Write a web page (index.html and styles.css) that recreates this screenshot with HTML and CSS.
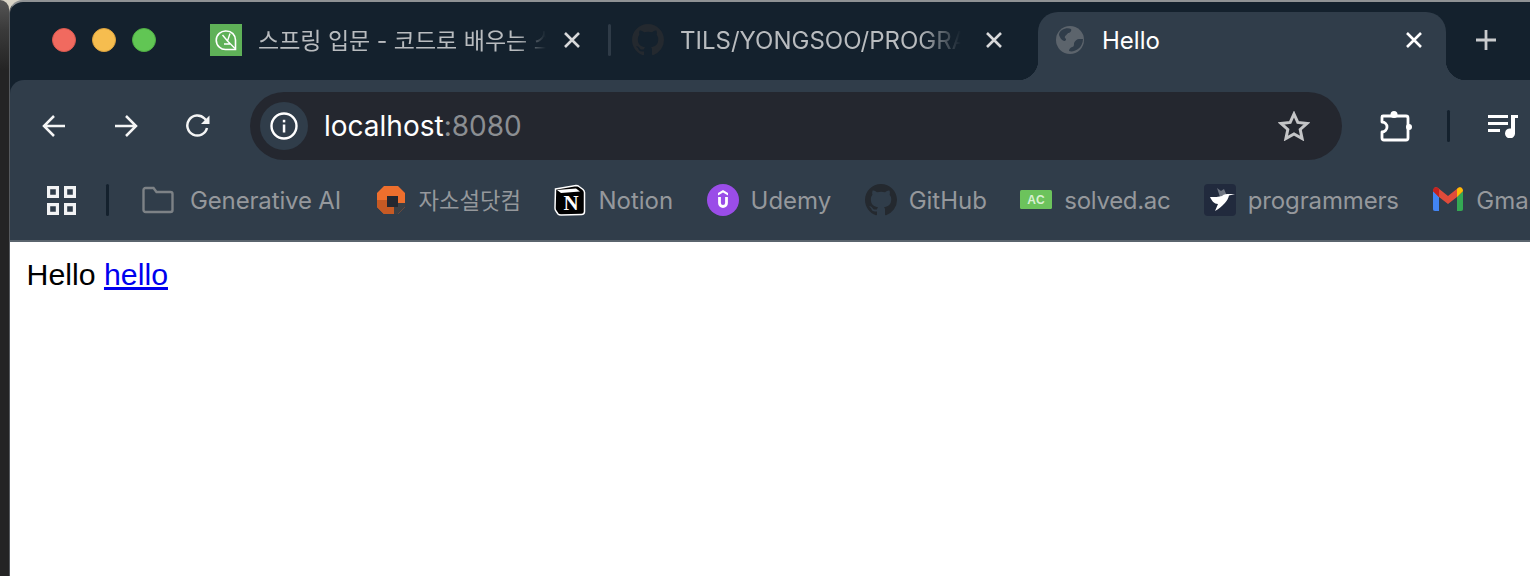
FILE: index.html
```html
<!DOCTYPE html>
<html lang="en">
<head>
    <meta charset="UTF-8">
    <title>Hello</title>
    <link rel="stylesheet" href="styles.css">
</head>
<body>
<div class="side"></div>
<div class="window">
    <div class="tabstrip">
        <div class="lights">
            <span class="light red"></span>
            <span class="light yellow"></span>
            <span class="light green"></span>
        </div>
        <div class="tab tab-first">
            <svg class="fav" viewBox="0 0 32 32">
                <rect width="32" height="32" fill="#5fb158"/>
                <path d="M16.500 7a9.300 9.300 0 1 0 0 18.500H25.500V16a9 9 0 0 0-9-9z" fill="none" stroke="#fff" stroke-width="1.600"/>
                <path d="M12.500 11l5 6M20 9.500l-2.500 7.500M17.500 17l7.500 7.500M14 20h6" fill="none" stroke="#fff" stroke-width="1.400"/>
            </svg>
            <span class="tab-title title-first">스프링 입문 - 코드로 배우는 스</span>
            <svg class="close" viewBox="0 0 16 16"><path d="M1 1l14 14M15 1L1 15"/></svg>
        </div>
        <span class="tab-sep"></span>
        <div class="tab tab-second">
            <svg class="fav" viewBox="0 0 16 16"><path class="octo" d="M8 0C3.580 0 0 3.580 0 8c0 3.540 2.290 6.530 5.470 7.590.4.070.550-.170.550-.380 0-.190-.010-.820-.010-1.490-2.010.370-2.530-.490-2.690-.940-.090-.230-.480-.940-.820-1.130-.280-.150-.680-.520-.010-.530.630-.010 1.080.580 1.230.820.720 1.210 1.870.870 2.330.660.070-.520.280-.870.510-1.070-1.780-.2-3.640-.890-3.640-3.950 0-.870.310-1.590.820-2.150-.080-.2-.360-1.020.080-2.120 0 0 .670-.210 2.200.820.640-.180 1.320-.270 2-.270.680 0 1.360.090 2 .270 1.530-1.040 2.200-.820 2.200-.820.440 1.100.160 1.920.080 2.120.510.560.820 1.270.820 2.150 0 3.070-1.870 3.750-3.650 3.950.290.250.540.730.540 1.480 0 1.070-.010 1.930-.010 2.200 0 .210.150.460.550.380A8.013 8.013 0 0 0 16 8c0-4.420-3.580-8-8-8z"/></svg>
            <span class="tab-title title-second">TILS/YONGSOO/PROGRA</span>
            <svg class="close" viewBox="0 0 16 16"><path d="M1 1l14 14M15 1L1 15"/></svg>
        </div>
        <div class="tab tab-active">
            <svg class="globe" viewBox="0 0 28 28">
                <circle cx="14" cy="14" r="14" fill="#5c646c"/>
                <path d="M6 4c3-2 7-2 9-1 1 2-1 4-3 4-1 2-4 3-3 5 2 1 1 3-1 3-3-1-4-4-5-6 0-2 1-4 3-5zM27 13c0 4-2 8-5 10-3 2-6 3-9 2 0-2 1-3 3-4 2 0 2-2 2-4 1-2 3-4 5-4z" fill="#303d4a"/>
            </svg>
            <span class="tab-title title-active">Hello</span>
            <svg class="close close-active" viewBox="0 0 16 16"><path d="M1 1l14 14M15 1L1 15"/></svg>
        </div>
        <svg class="newtab" viewBox="0 0 20 20"><path d="M10 0v20M0 10h20"/></svg>
    </div>

    <div class="toolbar">
        <div class="nav">
            <svg class="nav-icon" viewBox="0 0 24 24"><path d="M23 12H2M12 2L2 12l10 10"/></svg>
            <svg class="nav-icon" viewBox="0 0 24 24"><path d="M1 12h21M12 2l10 10-10 10"/></svg>
            <svg class="nav-icon" viewBox="0 0 24 24"><path d="M21 14a10 10 0 1 1-2.500-9.500L22 8"/><path class="fill-white" d="M23.500 1.500v8.500h-8.500z"/></svg>
        </div>
        <div class="omnibox">
            <span class="info">
                <svg class="info-icon" viewBox="0 0 28 28">
                    <circle cx="14" cy="14" r="12.500" fill="none" stroke="#fff" stroke-width="2.400"/>
                    <rect x="12.800" y="12.500" width="2.500" height="8" fill="#fff"/>
                    <rect x="12.800" y="7.800" width="2.500" height="2.600" fill="#fff"/>
                </svg>
            </span>
            <span class="url">localhost<span class="port">:8080</span></span>
            <svg class="star" viewBox="0 0 32 30"><path d="M16 3l3.800 8.400 9.200 1-6.800 6.100 1.900 9L16 22.900 7.900 27.500l1.900-9L3 12.400l9.200-1z"/></svg>
        </div>
        <svg class="puzzle" viewBox="0 0 32 32">
            <path d="M3 6H26a2 2 0 0 1 2 2V28a2 2 0 0 1-2 2H4a2 2 0 0 1-2-2V22a5 5 0 0 0 0-10V7a1 1 0 0 1 1-1z"/>
            <circle cx="14" cy="4.500" r="3.500" fill="#fff"/>
            <circle cx="29" cy="17" r="3" fill="#fff"/>
        </svg>
        <span class="tool-sep"></span>
        <svg class="media" viewBox="0 0 30 24">
            <path d="M0 1h20v3H0zM0 8h20v3H0zM0 15h12v3H0z" fill="#fff"/>
            <path d="M23 1h7v3h-3v15a5 5 0 1 1-4-4.500z" fill="#fff"/>
        </svg>
    </div>

    <div class="bookmarks">
        <svg class="apps" viewBox="0 0 29 29">
            <path d="M1.600 1.600h8.800v8.800h-8.800zM18.600 1.600h8.800v8.800h-8.800zM1.600 18.600h8.800v8.800h-8.800zM18.600 18.600h8.800v8.800h-8.800z"/>
        </svg>
        <span class="bm-sep"></span>
        <div class="bm-list">
            <div class="bm bm-folder">
                <svg class="bm-icon" viewBox="0 0 32 32"><path class="folder" d="M1.500 6c0-1 1-2 2-2h8l3 4h14c1 0 2 1 2 2v16c0 1-1 2-2 2h-25c-1 0-2-1-2-2z"/></svg>
                <span class="bm-tight">Generative AI</span>
            </div>
            <div class="bm bm-ko">
                <svg class="bm-icon" viewBox="0 0 32 32">
                    <path d="M9 2h14l7 7v14l-7 7H9l-7-7V9z" fill="#ee6f2d"/>
                    <path d="M2 16h10v7h7v7H9l-7-7z" fill="#c65a24"/>
                    <path d="M19 19h11v4l-7 7h-4z" fill="#3b3f44"/>
                    <rect x="12" y="12" width="11" height="11" fill="#24272f"/>
                </svg>
                <span class="bm-ko-text">자소설닷컴</span>
            </div>
            <div class="bm">
                <svg class="bm-icon" viewBox="0 0 32 32">
                    <path d="M1.500 5L22 1.500c1 0 2 0 3 1l4 3c1 1 1.500 1.500 1.500 3v19c0 2-1 3-3 3L7 31c-1 0-2 0-3-1l-2-3c-1-1-1-2-1-3z" fill="#000" stroke="#fff" stroke-width="1.500"/>
                    <path d="M3 6l4 3 19-1.500-4-3z" fill="#fff"/>
                    <text class="notion-n" x="17" y="26" text-anchor="middle">N</text>
                </svg>
                <span>Notion</span>
            </div>
            <div class="bm">
                <svg class="bm-icon" viewBox="0 0 32 32">
                    <circle cx="16" cy="16" r="16" fill="#9a4de8"/>
                    <path d="M16 6l5 3v2.500l-5-3-5 3V9z" fill="#fff"/>
                    <path d="M12.500 13v6a3.500 3.500 0 0 0 7 0v-6" fill="none" stroke="#fff" stroke-width="2.800"/>
                </svg>
                <span>Udemy</span>
            </div>
            <div class="bm">
                <svg class="bm-icon" viewBox="0 0 16 16"><path class="octo" d="M8 0C3.580 0 0 3.580 0 8c0 3.540 2.290 6.530 5.470 7.590.4.070.550-.170.550-.380 0-.190-.010-.820-.010-1.490-2.010.370-2.530-.490-2.690-.940-.090-.230-.480-.940-.820-1.130-.280-.150-.680-.520-.010-.530.630-.010 1.080.580 1.230.820.720 1.210 1.870.870 2.330.660.070-.520.280-.870.510-1.070-1.780-.2-3.640-.890-3.640-3.950 0-.870.310-1.590.820-2.150-.080-.2-.360-1.020.080-2.120 0 0 .670-.210 2.200.820.640-.180 1.320-.270 2-.270.680 0 1.360.090 2 .270 1.530-1.040 2.200-.820 2.200-.820.440 1.100.160 1.920.080 2.120.510.560.820 1.270.820 2.150 0 3.070-1.870 3.750-3.650 3.950.290.250.540.730.540 1.480 0 1.070-.010 1.930-.010 2.200 0 .210.150.460.550.380A8.013 8.013 0 0 0 16 8c0-4.420-3.580-8-8-8z"/></svg>
                <span>GitHub</span>
            </div>
            <div class="bm">
                <svg class="bm-icon" viewBox="0 0 32 32">
                    <rect y="6" width="32" height="19" rx="1.500" fill="#6cc35c"/>
                    <text class="solved-ac" x="16" y="20" text-anchor="middle">AC</text>
                </svg>
                <span class="bm-tighter">solved.ac</span>
            </div>
            <div class="bm">
                <svg class="bm-icon" viewBox="0 0 32 32">
                    <rect width="32" height="32" rx="4" fill="#212a3d"/>
                    <path d="M13 4l4 3 3-2 3 7-7 1z" fill="#6f7682"/>
                    <path d="M6 13c4 0 9 0 12-1 2-2 5-2 7-2h6l-6 1.500c-1 5.500-7 11.500-14 15.500l3-7c-4 0-6-3-8-7z" fill="#fff"/>
                </svg>
                <span class="bm-tight">programmers</span>
            </div>
            <div class="bm">
                <svg class="bm-icon" viewBox="0 0 32 32">
                    <path d="M1 7v18c0 1 .5 2 2 2h4V13z" fill="#4285f4"/>
                    <path d="M25 13v14h4c1.500 0 2-1 2-2V7z" fill="#34a853"/>
                    <path d="M1 7l6 6 9 7 9-7 6-6-1-3c-1-1-3-1-4 0l-10 8L6 4C5 3 3 3 2 4z" fill="#e04b3a"/>
                    <path d="M1 7c0-3 3-5 5-3l1 1v8z" fill="#c5221f"/>
                    <path d="M31 7c0-3-3-5-5-3l-1 1v8z" fill="#fbbc04"/>
                </svg>
                <span>Gmail</span>
            </div>
        </div>
    </div>

    <div class="page">Hello <a class="page-link" href="#">hello</a></div>
</div>
</body>
</html>
```

FILE: styles.css
```css
*{
    margin: 0;
    padding: 0;
    box-sizing: border-box;
}
html,body{
    height: 100%;
    overflow: hidden;
}
body{
    background: #d9d4c6;
    font-family: Inter, "Noto Sans CJK KR", sans-serif;
    display: flex;
}
/* edge of the window behind */
.side{
    width: 9px;
    flex: none;
    background: linear-gradient(to bottom, #555 0, #3a3a3a 30px, #242424 70px);
    border-top-right-radius: 10px;
}
.window{
    flex: 1;
    min-width: 0;
    height: 100%;
    border-top: 2px solid #8f9294;
    border-left: 1px solid #565a5e;
    background: #14212d;
    border-top-left-radius: 14px;
    overflow: hidden;
    display: flex;
    flex-direction: column;
}

/* tabs */
.tabstrip{
    height: 78px;
    flex: none;
    display: flex;
    align-items: flex-end;
    color: #b9bcbf;
    font-size: 24px;
}
.lights{
    width: 200px;
    height: 68px;
    padding-left: 42px;
    padding-bottom: 12px;
    display: flex;
    align-items: center;
    gap: 16px;
    flex: none;
}
.light{
    width: 24px;
    height: 24px;
    border-radius: 50%;
}
.red{ background: #f16a5f; border: 1px solid #d9584e; }
.yellow{ background: #f6bd4f; border: 1px solid #dca23d; }
.green{ background: #61c654; border: 1px solid #4fae43; }
.tab{
    height: 68px;
    padding-bottom: 12px;
    display: flex;
    align-items: center;
    flex: none;
    position: relative;
}
.tab-first{ width: 396px; }
.tab-second{ width: 406px; }
.fav{
    width: 32px;
    height: 32px;
    flex: none;
}
.tab-title{
    white-space: nowrap;
    overflow: hidden;
}
.title-first{
    width: 288px;
    margin-left: 16px;
    padding-bottom: 3px;
    font-size: 23px;
    -webkit-mask-image: linear-gradient(to right, #000 90%, transparent 100%);
    mask-image: linear-gradient(to right, #000 90%, transparent 100%);
}
.title-second{
    width: 281px;
    margin-left: 16px;
    -webkit-mask-image: linear-gradient(to right, #000 85%, transparent 100%);
    mask-image: linear-gradient(to right, #000 85%, transparent 100%);
}
.close{
    width: 16px;
    height: 16px;
    margin-left: 18px;
    flex: none;
}
.title-second + .close{
    margin-left: 25px;
}
.close path{
    fill: none;
    stroke: #d8d9da;
    stroke-width: 2.600;
}
.close-active path{
    stroke: #fff;
}
.tab-sep{
    width: 3px;
    height: 32px;
    margin-bottom: 24px;
    margin-right: 21px;
    margin-left: 2px;
    background: #2f3b47;
    border-radius: 2px;
    flex: none;
}
.octo{
    fill: #24292f;
}
.tab-active{
    width: 408px;
    padding-left: 18px;
    background: #303d4a;
    border-radius: 20px 20px 0 0;
    color: #fff;
}
.tab-active::before,
.tab-active::after{
    content: "";
    position: absolute;
    bottom: 0;
    width: 20px;
    height: 20px;
}
.tab-active::before{
    left: -20px;
    background: radial-gradient(circle at 0 0, transparent 20px, #303d4a 20.500px);
}
.tab-active::after{
    right: -20px;
    background: radial-gradient(circle at 100% 0, transparent 20px, #303d4a 20.500px);
}
.globe{
    width: 28px;
    height: 28px;
    flex: none;
}
.title-active{
    width: 286px;
    margin-left: 18px;
}
.newtab{
    width: 20px;
    height: 20px;
    margin-left: 30px;
    margin-bottom: 30px;
    flex: none;
}
.newtab path{
    fill: none;
    stroke: #c9cbcd;
    stroke-width: 2.800;
}

/* toolbar */
.toolbar{
    height: 92px;
    flex: none;
    background: #303d4a;
    border-top-left-radius: 14px;
    display: flex;
    align-items: center;
}
.nav{
    width: 240px;
    padding-left: 32px;
    display: flex;
    align-items: center;
    gap: 48px;
    flex: none;
}
.nav-icon{
    width: 24px;
    height: 24px;
    flex: none;
}
.nav-icon path{
    fill: none;
    stroke: #f4f5f5;
    stroke-width: 2.500;
}
.nav-icon .fill-white{
    fill: #f4f5f5;
    stroke: none;
}
.omnibox{
    width: 1092px;
    height: 68px;
    border-radius: 34px;
    background: #24272f;
    display: flex;
    align-items: center;
    padding-left: 10px;
    flex: none;
}
.info{
    width: 48px;
    height: 48px;
    border-radius: 50%;
    background: #303d4a;
    display: flex;
    align-items: center;
    justify-content: center;
    flex: none;
}
.info-icon{
    width: 28px;
    height: 28px;
}
.url{
    margin-left: 16px;
    font-size: 28px;
    color: #fff;
    flex: 1;
}
.port{
    color: #8b8e92;
}
.star{
    width: 32px;
    height: 30px;
    margin-right: 32px;
    flex: none;
}
.star path{
    fill: none;
    stroke: #c4c5c7;
    stroke-width: 3;
}
.puzzle{
    width: 32px;
    height: 32px;
    margin-left: 38px;
    flex: none;
}
.puzzle path{
    fill: none;
    stroke: #fff;
    stroke-width: 2.800;
    stroke-linejoin: round;
}
.tool-sep{
    width: 3px;
    height: 32px;
    margin-left: 35px;
    background: #14212d;
    border-radius: 2px;
    flex: none;
}
.media{
    width: 30px;
    height: 24px;
    margin-left: 38px;
    flex: none;
}

/* bookmarks bar */
.bookmarks{
    height: 70px;
    flex: none;
    background: #303d4a;
    border-bottom: 2px solid #5a646d;
    padding-left: 37px;
    padding-bottom: 12px;
    display: flex;
    align-items: center;
    overflow: hidden;
}
.apps{
    width: 29px;
    height: 29px;
    flex: none;
}
.apps path{
    fill: none;
    stroke: #f2f3f4;
    stroke-width: 3.200;
}
.bm-sep{
    width: 3px;
    height: 32px;
    margin-left: 30px;
    margin-right: 33px;
    background: #14212d;
    border-radius: 2px;
    flex: none;
}
.bm-list{
    display: flex;
    align-items: center;
    gap: 33.400px;
    flex: none;
}
.bm{
    display: flex;
    align-items: center;
    gap: 12px;
    font-size: 24px;
    color: #95989c;
    white-space: nowrap;
    flex: none;
}
.bm-folder{
    gap: 16px;
    margin-right: 1px;
}
.bm-tight{
    letter-spacing: -0.150px;
}
.bm-tighter{
    letter-spacing: -0.300px;
}
.bm-ko{
    gap: 11px;
    font-size: 22.300px;
}
.bm-ko-text{
    padding-bottom: 2px;
}
.bm-icon{
    width: 32px;
    height: 32px;
    flex: none;
}
.folder{
    fill: none;
    stroke: #7d8286;
    stroke-width: 2.400;
}
.notion-n{
    font-family: "Liberation Serif", serif;
    font-weight: bold;
    font-size: 21px;
    fill: #fff;
}
.solved-ac{
    font-family: "Liberation Sans", sans-serif;
    font-weight: bold;
    font-size: 12px;
    fill: #d8f0d2;
}

/* page content */
.page{
    flex: 1;
    background: #fff;
    color: #000;
    padding: 16px 16.500px;
    font-family: "Liberation Sans", sans-serif;
    font-size: 30.300px;
}
.page-link{
    color: #0000ee;
}
```
